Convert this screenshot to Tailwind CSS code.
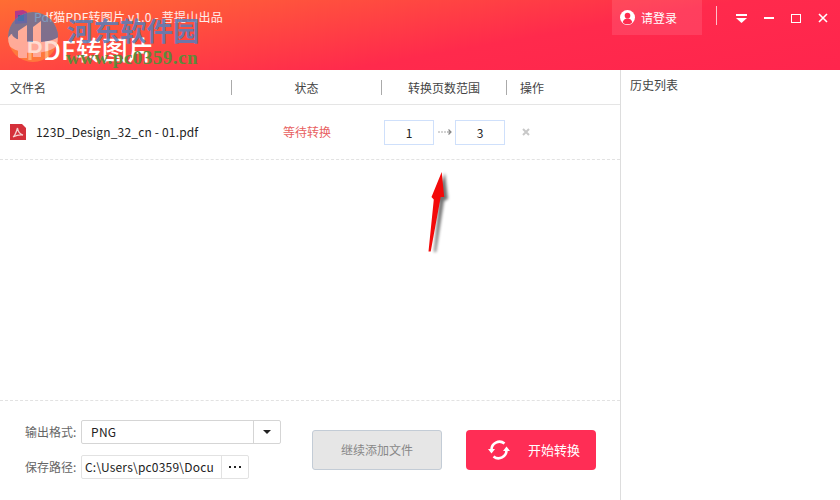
<!DOCTYPE html>
<html lang="zh-CN">
<head>
<meta charset="UTF-8" />
<title>PDF转图片</title>
<script src="https://cdn.jsdelivr.net/npm/@tailwindcss/browser@4"></script>
</head>
<body class="bg-white overflow-hidden">
<div class="relative w-[840px] h-[500px] flex flex-col font-['Noto_Sans_CJK_SC',sans-serif] text-[12px] text-[#444]">

  <!-- header -->
  <header class="h-[70px] shrink-0 flex justify-between bg-[linear-gradient(170deg,#ff6d33_0%,#ff2a4c_60%,#ff254d_100%)] text-white">
    <div class="pl-[14px] pt-[8px]">
      <div class="flex items-center h-[18px]">
        <svg class="w-[14px] h-[16px]" viewBox="0 0 14 16"><path d="M1 2l8-1 4 2v11l-12 1z" fill="#b23a8a"/><rect x="4" y="6" width="6" height="6" fill="#3d5aa8"/></svg>
        <span class="ml-[6px] text-[12px] leading-[18px] tracking-[0.2px] text-white/90">Pdf猫PDF转图片 v1.0 - 菩提山出品</span>
      </div>
      <div class="mt-[6px] ml-[12px] text-[26px] leading-[34px] font-medium text-white">PDF转图片</div>
    </div>
    <div class="flex items-start pr-[12px]">
      <div class="w-[90px] h-[35px] bg-white/10 flex items-center pl-[8px] gap-[6px]">
        <svg class="w-[15px] h-[15px]" viewBox="0 0 16 16"><circle cx="8" cy="8" r="8" fill="#fff"/><circle cx="8" cy="6" r="3" fill="#ff2a4e"/><path d="M2.800 13c1-3 3-4 5.200-4s4.200 1 5.200 4a7 7 0 0 1-10.400 0z" fill="#ff2a4e"/></svg>
        <span class="text-[12px]">请登录</span>
      </div>
      <div class="ml-[14px] mt-[6px] w-px h-[19px] bg-white/70"></div>
      <div class="flex items-center h-[18px] mt-[9px] ml-[19px] gap-[17px]">
        <svg class="w-[11px] h-[9px]" viewBox="0 0 11 9"><rect width="11" height="2" fill="#fff"/><path d="M0 4h11l-5.500 5z" fill="#fff"/></svg>
        <div class="w-[10px] h-[2px] bg-white"></div>
        <div class="w-[10px] h-[9px] border-[1.5px] border-white"></div>
        <svg class="w-[10px] h-[10px]" viewBox="0 0 10 10"><path d="M1 1l8 8M9 1l-8 8" stroke="#fff" stroke-width="1.600"/></svg>
      </div>
    </div>
  </header>

  <div class="flex-1 flex min-h-0">
    <main class="w-[620px] flex flex-col">
      <!-- table head -->
      <div class="grid grid-cols-[232px_150px_125px_113px] h-[35px] items-center border-b border-[#e5e5e5]">
        <div class="pl-[10px] h-[15px] leading-[15px] border-r border-[#aaa]">文件名</div>
        <div class="text-center h-[15px] leading-[15px] border-r border-[#aaa]">状态</div>
        <div class="text-center h-[15px] leading-[15px] border-r border-[#aaa]">转换页数范围</div>
        <div class="pl-[13px] h-[15px] leading-[15px]">操作</div>
      </div>
      <!-- file row -->
      <div class="grid grid-cols-[232px_150px_125px_113px] h-[55px] items-center border-b border-dashed border-[#e2e2e2]">
        <div class="flex items-center pl-[10px]">
          <svg class="w-[16px] h-[16px]" viewBox="0 0 16 16"><path d="M0 0h12l4 4v12H0z" fill="#d5303a"/><path d="M3 13c2-1 3-4 4.500-9 .5 4 2 6 5.500 7-3-.5-6 0-10 2z" fill="none" stroke="#f6d0d0" stroke-width="1.300"/></svg>
          <span class="ml-[10px] tracking-[0.17px] text-[#222]">123D_Design_32_cn - 01.pdf</span>
        </div>
        <div class="text-center text-[#e8615f]">等待转换</div>
        <div class="flex items-center pl-[2px]">
          <div class="w-[50px] h-[25px] border border-[#cfe0fb] text-center leading-[23px] text-[#222]">1</div>
          <svg class="w-[21px] h-[8px]" viewBox="0 0 21 8"><path d="M4 4h9" stroke="#aaa" stroke-width="1.200" stroke-dasharray="2 1"/><path d="M13 4h4M14.500 1.500L17 4l-2.500 2.500" stroke="#888" stroke-width="1.200" fill="none"/></svg>
          <div class="w-[50px] h-[25px] border border-[#cfe0fb] text-center leading-[23px] text-[#222]">3</div>
        </div>
        <div class="pl-[15px]">
          <svg class="w-[8px] h-[8px]" viewBox="0 0 8 8"><path d="M1 1l6 6M7 1l-6 6" stroke="#c8c8c8" stroke-width="2"/></svg>
        </div>
      </div>
      <div class="flex-1"></div>
      <!-- bottom bar -->
      <div class="h-[100px] border-t border-dashed border-[#e2e2e2] flex">
        <div class="w-[312px] pl-[25px] pt-[19px]">
          <div class="flex items-center h-[24px]">
            <span class="w-[56px] text-[#666]">输出格式:</span>
            <div class="w-[200px] h-[24px] border border-[#d5d5d5] rounded-[2px] flex items-center">
              <span class="flex-1 pl-[9px] tracking-[0.3px] text-[#222]">PNG</span>
              <div class="w-[27px] h-full border-l border-[#d5d5d5] flex items-center justify-center">
                <div class="border-x-[4px] border-x-transparent border-t-[4px] border-t-[#222]"></div>
              </div>
            </div>
          </div>
          <div class="flex items-center h-[24px] mt-[11px]">
            <span class="w-[56px] text-[#666]">保存路径:</span>
            <div class="w-[168px] h-[24px] border border-[#e2e2e2] rounded-[2px] flex items-center">
              <span class="w-[139px] pl-[3px] tracking-[0.2px] whitespace-nowrap text-[#222]">C:\Users\pc0359\Docu</span>
              <div class="flex-1 h-full border-l border-[#e2e2e2] flex items-center justify-center gap-[3px]">
                <i class="w-[2px] h-[2px] bg-[#222]"></i><i class="w-[2px] h-[2px] bg-[#222]"></i><i class="w-[2px] h-[2px] bg-[#222]"></i>
              </div>
            </div>
          </div>
        </div>
        <div class="pt-[29px] flex items-start gap-[24px]">
          <div class="w-[130px] h-[40px] bg-[#e6e6e6] border border-[#c3ccd6] rounded-[3px] flex items-center justify-center text-[#888]">继续添加文件</div>
          <div class="w-[130px] h-[40px] bg-[#ff2d55] rounded-[4px] flex items-center text-white">
            <svg class="ml-[21px] w-[24px] h-[22px]" viewBox="0 0 24 22" fill="none" stroke="#fff" stroke-width="2.600"><path d="M4.500 11a8 8 0 0 1 13-6.500"/><path d="M19.500 11a8 8 0 0 1-13 6.500"/><path d="M1 10h7l-3.500 4.500zM16 12h7l-3.500-4.500z" fill="#fff" stroke="none"/></svg>
            <span class="ml-[17px] text-[13px]">开始转换</span>
          </div>
        </div>
      </div>
    </main>
    <!-- history -->
    <aside class="flex-1 border-l border-[#ddd] pl-[9px] pt-[6px] leading-[18px]">历史列表</aside>
  </div>

  <!-- red annotation arrow -->
  <svg class="absolute left-[415px] top-[165px] w-[45px] h-[95px]" viewBox="415 165 45 95">
    <path class="blur-[1.5px]" d="M431 251l5-50-4-3 10-26 3 26-4 2-8 51z" fill="#000" opacity=".55" transform="translate(3 1)"/>
    <path d="M428.500 251.500l5.300-52-2.300-2.500 10.200-25 2.500 25-3.500 0-10 54.500z" fill="#f30a0a"/>
  </svg>

  <!-- watermark -->
  <svg class="absolute left-[6px] top-[10px] w-[54px] h-[56px] opacity-70" viewBox="0 0 54 56">
    <defs><clipPath id="wm"><circle cx="27" cy="27" r="25"/></clipPath></defs>
    <g clip-path="url(#wm)">
      <rect width="54" height="56" fill="#ff8a3c"/>
      <rect width="54" height="30" fill="#4a7ab0"/>
      <ellipse cx="27" cy="31" rx="26" ry="12" fill="#ffcfc0"/>
      <ellipse cx="30" cy="24" rx="24" ry="8" fill="#4a7ab0"/>
      <path d="M12 21l9-6v33h-9z" fill="#ffcfc0"/>
      <path d="M27 17l8-6v36h-8z" fill="#ffcfc0"/>
    </g>
  </svg>
  <div class="absolute left-[67px] top-[14px] text-[26.5px] leading-[32px] font-bold text-[#5a7db8]/90 whitespace-nowrap">河东软件园</div>
  <div class="absolute left-[66px] top-[47px] text-[19px] leading-[22px] font-bold text-[#5f8a3a] font-['Liberation_Serif',serif] whitespace-nowrap tracking-[0.5px]">www.pc0359.cn</div>
</div>
</body>
</html>
